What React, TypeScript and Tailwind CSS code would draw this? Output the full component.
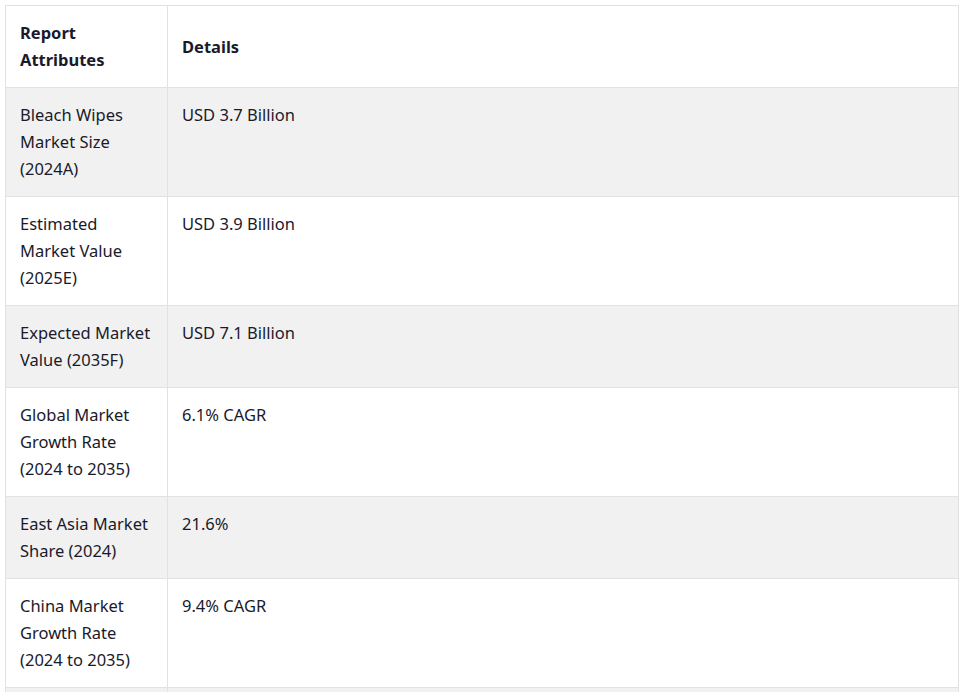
import React from "react";

const ROWS: [string, string][] = [
  ["Bleach Wipes Market Size (2024A)", "USD 3.7 Billion"],
  ["Estimated Market Value (2025E)", "USD 3.9 Billion"],
  ["Expected Market Value (2035F)", "USD 7.1 Billion"],
  ["Global Market Growth Rate (2024 to 2035)", "6.1% CAGR"],
  ["East Asia Market Share (2024)", "21.6%"],
  ["China Market Growth Rate (2024 to 2035)", "9.4% CAGR"],
];

const cell = "border border-[#e2e2e2] pl-[14px] pt-[13px] pb-[14px] text-left";

export default function App() {
  return (
    <div
      className="h-[692px] overflow-hidden bg-white p-[5px] text-[16.5px] leading-[27px] text-[#1a1a2a]"
      style={{ fontFamily: '"Segoe UI", "Noto Sans", "Open Sans", sans-serif' }}
    >
      <table className="w-[954px] border-collapse border border-[#e2e2e2]">
        <thead>
          <tr className="bg-white">
            <th className={`${cell} pr-[16px] w-[162px] align-top font-bold`}>Report Attributes</th>
            <th className={`${cell} pr-[12px] align-middle font-bold`}>Details</th>
          </tr>
        </thead>
        <tbody>
          {ROWS.map(([label, value], i) => (
            <tr key={label} className={i % 2 === 0 ? "bg-[#f1f1f1]" : "bg-white"}>
              <td className={`${cell} pr-[16px] align-top`}>{label}</td>
              <td className={`${cell} pr-[12px] align-top`}>{value}</td>
            </tr>
          ))}
          {/* next row, only its top edge is in view */}
          <tr className="bg-[#f1f1f1]">
            <td className={`${cell} h-[54px]`} />
            <td className={`${cell} h-[54px]`} />
          </tr>
        </tbody>
      </table>
    </div>
  );
}
